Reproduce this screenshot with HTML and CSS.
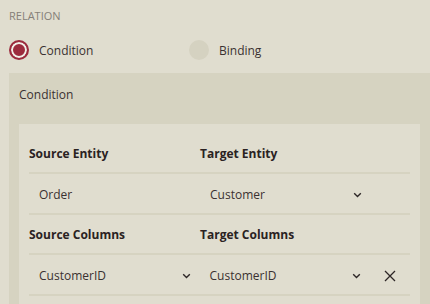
FILE: index.html
```html
<!DOCTYPE html>
<html lang="en">
<head>
    <meta charset="UTF-8">
    <title>Relation</title>
    <link rel="stylesheet" href="styles.css">
</head>
<body>
    <div class="section-title">RELATION</div>

    <div class="radio-row">
        <label class="radio-option">
            <span class="radio checked"></span>
            Condition
        </label>
        <label class="radio-option">
            <span class="radio"></span>
            Binding
        </label>
    </div>

    <div class="panel">
        <div class="panel-header">Condition</div>
        <div class="card">
            <div class="row head">
                <div class="cell">Source Entity</div>
                <div class="cell">Target Entity</div>
            </div>
            <div class="row">
                <div class="cell value">Order</div>
                <div class="cell value select">
                    <span>Customer</span>
                    <svg class="chevron" width="9" height="6" viewBox="0 0 9 6"><path d="M1.2 1.2 L4.5 4.4 L7.8 1.2" fill="none" stroke="#2d2626" stroke-width="1.4"/></svg>
                </div>
            </div>
            <div class="row head">
                <div class="cell">Source Columns</div>
                <div class="cell">Target Columns</div>
            </div>
            <div class="row">
                <div class="cell value select">
                    <span>CustomerID</span>
                    <svg class="chevron" width="9" height="6" viewBox="0 0 9 6"><path d="M1.2 1.2 L4.5 4.4 L7.8 1.2" fill="none" stroke="#2d2626" stroke-width="1.4"/></svg>
                </div>
                <div class="cell value select">
                    <span>CustomerID</span>
                    <svg class="chevron" width="9" height="6" viewBox="0 0 9 6"><path d="M1.2 1.2 L4.5 4.4 L7.8 1.2" fill="none" stroke="#2d2626" stroke-width="1.4"/></svg>
                </div>
                <div class="remove">
                    <svg width="12" height="12" viewBox="0 0 12 12"><path d="M1 1 L11 11 M11 1 L1 11" stroke="#2d2626" stroke-width="1.3"/></svg>
                </div>
            </div>
        </div>
    </div>
</body>
</html>
```

FILE: styles.css
```css
body {
    margin: 0;
    background-color: #e0ddcf;
    font-family: "Open Sans", "Noto Sans", sans-serif;
    font-size: 12px;
    color: #3a3131;
}

.section-title {
    padding: 8px 9px 0;
    height: 16px;
    line-height: 16px;
    font-size: 11px;
    color: #857f78;
}

/* radio buttons */
.radio-row {
    display: flex;
    padding: 15px 9px 0;
    height: 23px;
}

.radio-option {
    display: flex;
    align-items: center;
    gap: 10px;
    width: 180px;
    height: 22px;
}

.radio {
    width: 20px;
    height: 20px;
    border-radius: 50%;
    background-color: #d5d2c1;
    box-sizing: border-box;
}

.radio.checked {
    background-color: #9c2b3d;
    border: 2px solid #9c2b3d;
    box-shadow: inset 0 0 0 2px #f2efe8;
}

/* panel */
.panel {
    margin: 11px 0 0 9px;
    padding: 0 10px 10px;
    background-color: #d6d3c1;
}

.panel-header {
    height: 51px;
    line-height: 44px;
}

.card {
    background-color: #e0ddcf;
    padding: 10px 10px 10px;
}

.row {
    display: flex;
    height: 38px;
    align-items: center;
    border-bottom: 2px solid #d6d3c1;
}

.row:not(.head) {
    padding-top: 2px;
    height: 37px;
}

.cell {
    width: 171px;
    box-sizing: border-box;
}

.row.head .cell {
    font-weight: 700;
    color: #2a2222;
}

.value {
    padding-left: 10px;
}

.select {
    display: flex;
    align-items: center;
    justify-content: space-between;
    padding-right: 9px;
}

.chevron {
    display: block;
}

.remove {
    width: 40px;
    display: flex;
    justify-content: center;
}

.remove svg {
    display: block;
}
```
